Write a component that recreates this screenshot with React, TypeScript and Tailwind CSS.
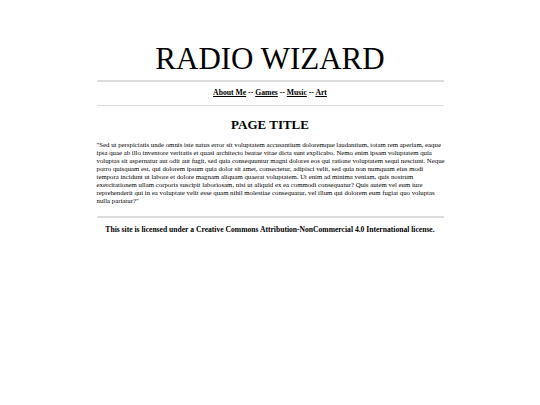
const links = ['About Me', 'Games', 'Music', 'Art'];

const quote =
    '"Sed ut perspiciatis unde omnis iste natus error sit voluptatem accusantium doloremque laudantium, totam rem aperiam, eaque ipsa quae ab illo inventore veritatis et quasi architecto beatae vitae dicta sunt explicabo. Nemo enim ipsam voluptatem quia voluptas sit aspernatur aut odit aut fugit, sed quia consequuntur magni dolores eos qui ratione voluptatem sequi nesciunt. Neque porro quisquam est, qui dolorem ipsum quia dolor sit amet, consectetur, adipisci velit, sed quia non numquam eius modi tempora incidunt ut labore et dolore magnam aliquam quaerat voluptatem. Ut enim ad minima veniam, quis nostrum exercitationem ullam corporis suscipit laboriosam, nisi ut aliquid ex ea commodi consequatur? Quis autem vel eum iure reprehenderit qui in ea voluptate velit esse quam nihil molestiae consequatur, vel illum qui dolorem eum fugiat quo voluptas nulla pariatur?"';

export default function App() {
    return (
        <div className="min-h-[405px] bg-white text-black font-['Liberation_Serif','Times_New_Roman',serif]">
            <div className="w-[347px] mx-auto pt-[41px] flex flex-col">
                <h1 className="text-center text-[31px] leading-[36px] font-normal">RADIO WIZARD</h1>

                <div className="mt-[3px] h-[1.5px] bg-[#dcdcdc]" />

                <nav className="mt-[6px] text-center text-[7.7px] leading-[9px] font-bold">
                    {links.map((label, i) => (
                        <span key={label}>
                            {i > 0 && ' -- '}
                            <a href="#" className="underline">
                                {label}
                            </a>
                        </span>
                    ))}
                </nav>

                <div className="mt-[8px] h-[1.5px] bg-[#dcdcdc]" />

                <h2 className="mt-[11px] text-center text-[13px] leading-[15px] font-bold">PAGE TITLE</h2>

                <p className="mt-[9px] w-[350px] text-[6.8px] leading-[8px]">{quote}</p>

                <div className="mt-[11px] h-[1.5px] bg-[#dcdcdc]" />

                <p className="mt-[7px] text-center text-[7.6px] leading-[9px] font-bold whitespace-nowrap">
                    This site is licensed under a Creative Commons Attribution-NonCommercial 4.0 International license.
                </p>
            </div>
        </div>
    );
}
